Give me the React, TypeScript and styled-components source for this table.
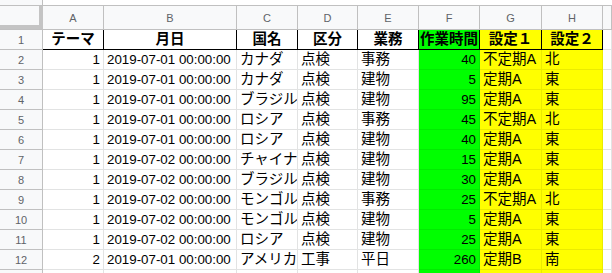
import React from 'react';
import styled, { createGlobalStyle } from 'styled-components';

type Fill = 'green' | 'yellow' | undefined;

const GlobalStyle = createGlobalStyle`
  html, body {
    margin: 0;
    padding: 0;
    background: #ffffff;
    overflow: hidden;
  }
  body {
    font-family: "Liberation Sans", "Noto Sans CJK JP", sans-serif;
  }
`;

const COLUMNS = '43px 61px 133px 61px 60px 61px 61px 62px 61px 1fr';

const fills: Record<string, string> = {
  green: '#00ff00',
  yellow: '#ffff00',
};

const headers = ['テーマ', '月日', '国名', '区分', '業務', '作業時間', '設定１', '設定２'];
const headerFills: Fill[] = [undefined, undefined, undefined, undefined, undefined, 'green', 'yellow', 'yellow'];

const rows: (string | number)[][] = [
  [1, '2019-07-01 00:00:00', 'カナダ', '点検', '事務', 40, '不定期A', '北'],
  [1, '2019-07-01 00:00:00', 'カナダ', '点検', '建物', 5, '定期A', '東'],
  [1, '2019-07-01 00:00:00', 'ブラジル', '点検', '建物', 95, '定期A', '東'],
  [1, '2019-07-01 00:00:00', 'ロシア', '点検', '事務', 45, '不定期A', '北'],
  [1, '2019-07-01 00:00:00', 'ロシア', '点検', '建物', 40, '定期A', '東'],
  [1, '2019-07-02 00:00:00', 'チャイナ', '点検', '建物', 15, '定期A', '東'],
  [1, '2019-07-02 00:00:00', 'ブラジル', '点検', '建物', 30, '定期A', '東'],
  [1, '2019-07-02 00:00:00', 'モンゴル', '点検', '事務', 25, '不定期A', '北'],
  [1, '2019-07-02 00:00:00', 'モンゴル', '点検', '建物', 5, '定期A', '東'],
  [1, '2019-07-02 00:00:00', 'ロシア', '点検', '建物', 25, '定期A', '東'],
  [2, '2019-07-01 00:00:00', 'アメリカ', '工事', '平日', 260, '定期B', '南'],
];

// the next row only peeks in at the bottom edge, so it carries no text
const EMPTY_ROW = ['', '', '', '', '', '', '', ''];

const App: React.FC = () => {
  return (
    <Sheet>
      <GlobalStyle />
      <TopStrip>
        <TopCorner />
      </TopStrip>
      <Row $height={24}>
        <Corner />
        {['A', 'B', 'C', 'D', 'E', 'F', 'G', 'H'].map((letter) => (
          <ColHead key={letter}>{letter}</ColHead>
        ))}
        <ColHead />
      </Row>
      <Row $height={20}>
        <RowHead>1</RowHead>
        {headers.map((title, i) => (
          <TitleCell key={title} $fill={headerFills[i]}>{title}</TitleCell>
        ))}
        <Cell />
      </Row>
      {rows.map((row, r) => (
        <Row key={r} $height={20}>
          <RowHead>{r + 2}</RowHead>
          {row.map((value, c) => (
            <Cell
              key={c}
              $fill={headerFills[c]}
              $numeric={typeof value === 'number'}
              $cjk={c >= 2 && c !== 5}
            >
              {value}
            </Cell>
          ))}
          <Cell />
        </Row>
      ))}
      <Row $height={20}>
        <RowHead />
        {EMPTY_ROW.map((_, c) => (
          <Cell key={c} $fill={headerFills[c]} />
        ))}
        <Cell />
      </Row>
    </Sheet>
  );
};

const Sheet = styled.div`
  width: 612px;
  height: 273px;
  overflow: hidden;
  background: #ffffff;
`;

const TopStrip = styled.div`
  display: flex;
  height: 6px;
  box-sizing: border-box;
  border-bottom: 1px solid #c0c0c0;
  background: #ffffff;
`;

const TopCorner = styled.div`
  width: 43px;
  box-sizing: border-box;
  border-right: 1px solid #c0c0c0;
  background: #f8f9fa;
`;

const Row = styled.div<{ $height: number }>`
  display: grid;
  grid-template-columns: ${COLUMNS};
  height: ${(p) => p.$height}px;
`;

const Corner = styled.div`
  box-sizing: border-box;
  background: #f8f9fa;
  border-right: 4px solid #c4c4c4;
  border-bottom: 4px solid #c4c4c4;
  margin-bottom: 1px;
  box-shadow: 0 1px 0 #c0c0c0;
`;

const ColHead = styled.div`
  box-sizing: border-box;
  display: flex;
  align-items: center;
  justify-content: center;
  background: #f8f9fa;
  border-right: 1px solid #c0c0c0;
  border-bottom: 1px solid #c0c0c0;
  color: #5f6368;
  font-family: "Liberation Sans", Arial, sans-serif;
  font-size: 11px;
  padding-top: 1px;
`;

const RowHead = styled.div`
  box-sizing: border-box;
  display: flex;
  align-items: center;
  justify-content: center;
  background: #f8f9fa;
  border-right: 1px solid #c0c0c0;
  border-bottom: 1px solid #c0c0c0;
  color: #5f6368;
  font-family: "Liberation Sans", Arial, sans-serif;
  font-size: 11px;
`;

const Cell = styled.div<{ $fill?: Fill; $numeric?: boolean; $cjk?: boolean }>`
  box-sizing: border-box;
  display: flex;
  align-items: center;
  justify-content: ${(p) => (p.$numeric ? 'flex-end' : 'flex-start')};
  padding: 0 3px;
  overflow: hidden;
  white-space: nowrap;
  background: ${(p) => (p.$fill ? fills[p.$fill] : '#ffffff')};
  border-right: 1px solid ${(p) => (p.$fill ? 'rgba(0, 0, 0, 0.08)' : '#e2e3e3')};
  border-bottom: 1px solid ${(p) => (p.$fill ? 'rgba(0, 0, 0, 0.08)' : '#e2e3e3')};
  color: #000000;
  font-family: "Liberation Sans", "Noto Sans CJK JP", sans-serif;
  font-size: ${(p) => (p.$cjk ? '14.5px' : '13.33px')};
  line-height: 1;
`;

const TitleCell = styled.div<{ $fill?: Fill }>`
  box-sizing: border-box;
  display: flex;
  align-items: center;
  justify-content: center;
  overflow: hidden;
  white-space: nowrap;
  background: ${(p) => (p.$fill ? fills[p.$fill] : '#ffffff')};
  border-right: 1px solid #000000;
  border-bottom: 1px solid #000000;
  color: #000000;
  font-family: "Liberation Sans", "Noto Sans CJK JP", sans-serif;
  font-weight: 700;
  font-size: 14.5px;
  line-height: 1;
`;

export default App;
